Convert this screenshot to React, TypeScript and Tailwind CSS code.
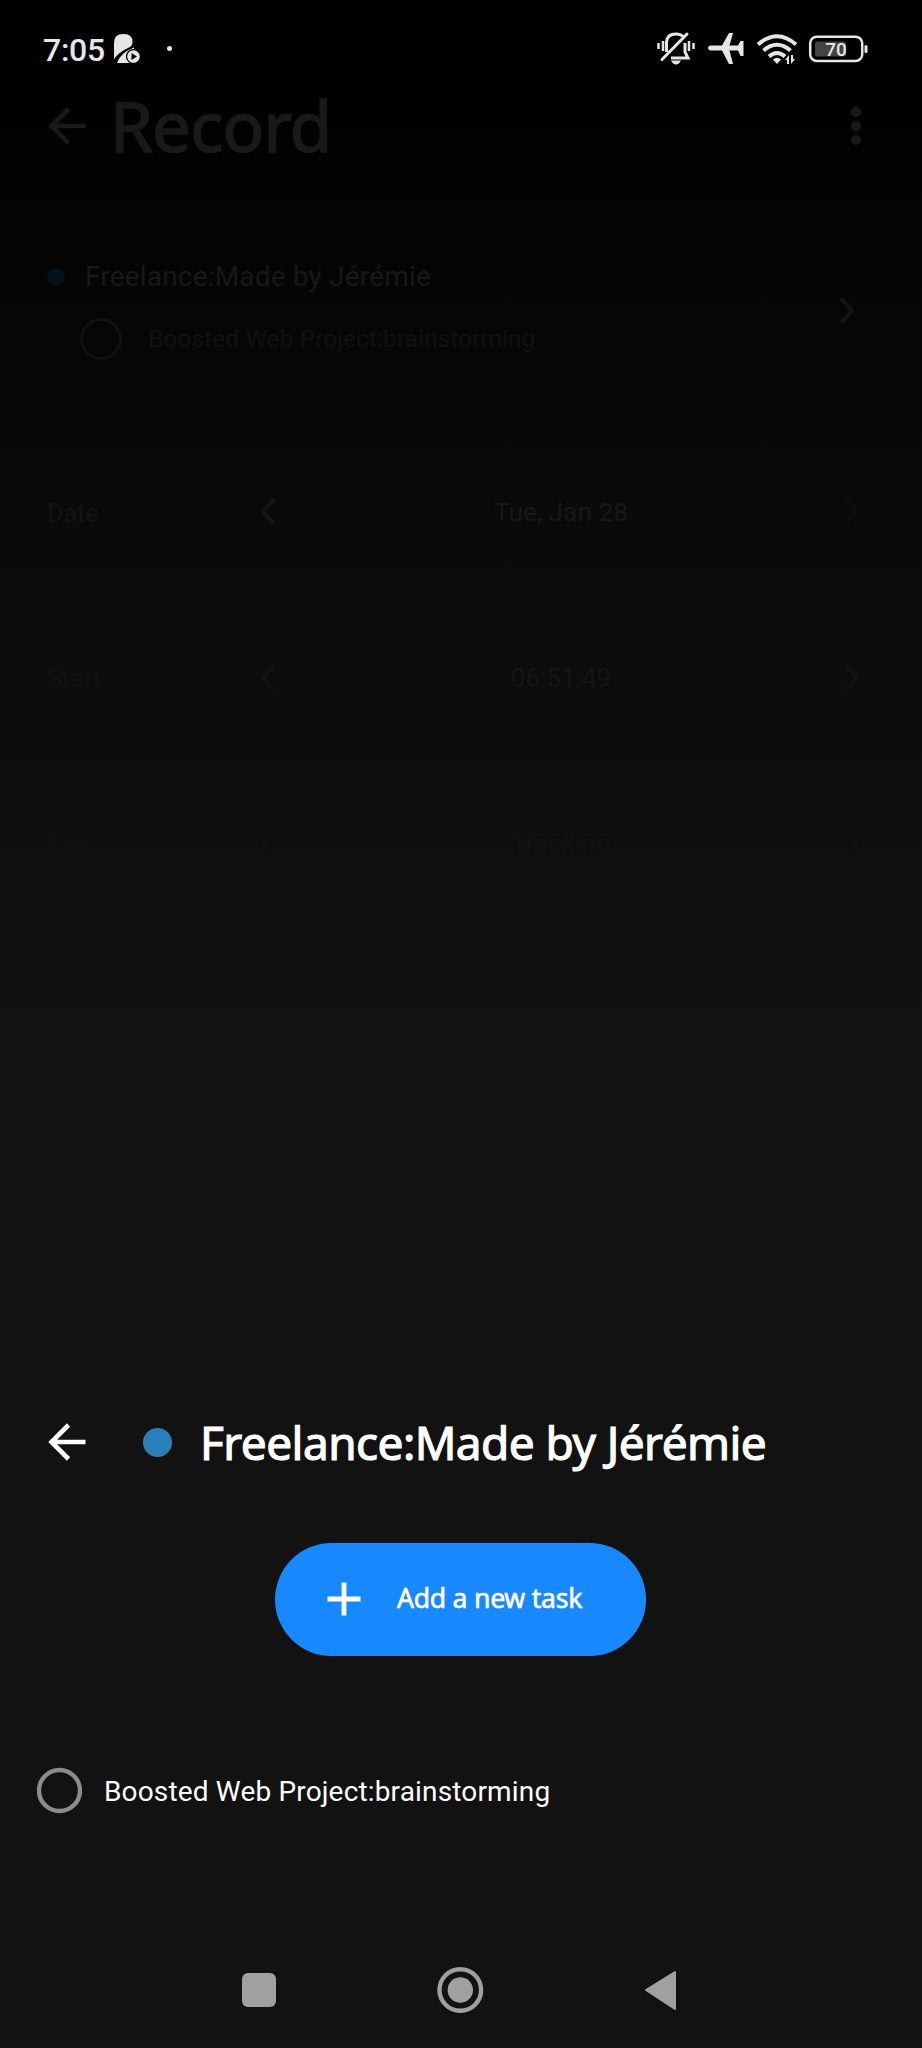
import React from "react";

const Chevron = ({ dir, className }: { dir: "left" | "right"; className: string }) => (
  <svg viewBox="0 0 16 27" className={`h-[27px] w-4 shrink-0 ${className}`} fill="none" stroke="currentColor" strokeWidth="4" strokeLinejoin="miter">
    <path d={dir === "left" ? "M14 1.5 3 13.5 14 25.5" : "M2 1.5 13 13.5 2 25.5"} />
  </svg>
);

const BackArrow = ({ className }: { className: string }) => (
  <svg viewBox="0 0 38 38" className={`h-[38px] w-[38px] shrink-0 ${className}`} fill="none" stroke="currentColor" strokeWidth="4.6">
    <path d="M37.5 19H4M20.5 2 3.5 19 20.5 36" />
  </svg>
);

const StatusBar = () => (
  <header className="flex h-24 shrink-0 items-center pl-[43px] text-[#e6e6e6]">
    <span className="mt-[4px] w-[68px] text-[32px] leading-none font-medium tracking-[-0.3px]">7:05</span>
    <svg viewBox="0 0 30 32" className="mt-[1px] ml-[2px] h-8 w-[30px]">
      <path fill="currentColor" d="M1 26V10Q1 1 10 1H11Q19.500 1 19.500 9Q19.500 12.500 16 14.500Q6 19 1 26Z" />
      <path fill="currentColor" d="M4 30Q7 20 21 14.500V20L17 30Z" />
      <circle cx="20.500" cy="23.500" r="7.600" fill="#000" />
      <circle cx="20.500" cy="23.500" r="6.300" fill="currentColor" />
      <path fill="#000" d="M18.500 20v7l5.500-3.500Z" />
    </svg>
    <span className="mt-[1px] ml-[24px] h-[5px] w-[5px] rounded-full bg-[#e6e6e6]" />
    <svg viewBox="0 0 220 40" className="mt-[4px] ml-[484px] h-10 w-[220px]" fill="none" stroke="currentColor">
      <path strokeWidth="2.500" d="M2.500 13v6M7 11v10M37.500 13v6M33 11v10" />
      <path strokeWidth="3" d="M10.500 22V12Q11 4 20 4Q25 4 27.500 7M29 13V22L32 28H15" />
      <path strokeWidth="3" strokeLinecap="round" d="M31 4 6 29.500" />
      <path fill="currentColor" stroke="none" d="M15 30.500h10q-2 4-5 4t-5-4Z" />
      <path fill="currentColor" stroke="none" d="M54 15.500H66L73 3H77L73.500 15.500H82L84.500 11H87.500V26H84.500L82 20.500H73.500L77 34H73L66 20.500H54Q50 18 54 15.500Z" />
      <path strokeWidth="4" d="M102 14.500Q121 -2 140 14.500M107.500 20.500Q121 9 134.500 20.500M113 26.500Q121 19.500 129 26.500" />
      <path fill="currentColor" stroke="none" d="M117 29.500Q121 26 125 29.500L121 34Z" />
      <path fill="currentColor" stroke="none" d="M129 30l4-5v9h-2v-4ZM139 29l-4 5v-9h2v4Z" />
      <g transform="translate(1 .5)">
        <rect x="153.200" y="6.200" width="52" height="24.200" rx="6.500" strokeWidth="2.500" />
        <rect x="158" y="11" width="31" height="15" rx="2" fill="#444" stroke="none" />
        <path strokeWidth="3" strokeLinecap="round" d="M209 16v5" />
        <text x="179" y="25" textAnchor="middle" fontSize="19" fontWeight="500" fill="currentColor" stroke="none">70</text>
      </g>
    </svg>
  </header>
);

const rows = [
  { label: "Date", value: "Tue, Jan 28", text: "text-[#181818]", labelColor: "text-[#131313]", left: "text-[#161616]", right: "text-[#0e0e0e]", size: "text-[26.3px]" },
  { label: "Start", value: "06:51:49", text: "text-[#151515]", labelColor: "text-[#121212]", left: "text-[#131313]", right: "text-[#131313]", size: "text-[26px]" },
  { label: "End", value: "Tracking", text: "text-[#121212]", labelColor: "text-[#101010]", left: "text-[#111111]", right: "text-[#111111]", size: "text-[26px]" },
];

export default function App() {
  return (
    <div className="flex h-[2048px] w-[922px] flex-col overflow-hidden bg-[#121212] bg-[linear-gradient(to_bottom,#000_0px,#010101_100px,#050505_280px,#0a0a0a_520px,#0d0d0d_720px,#101010_900px,#121212_1050px,#121212_2048px)] font-[Roboto,sans-serif]">
      <StatusBar />

      <div className="flex h-[66px] shrink-0 items-center pr-[59px] pl-[48px] text-[#191919]">
        <BackArrow className="mt-[-6px]" />
        <h1 className="mt-[-8px] ml-[24px] flex-1 font-['Noto_Sans',sans-serif] text-[69px] leading-[66px] font-normal tracking-[-0.8px] [-webkit-text-stroke:1.6px_currentColor]">Record</h1>
        <div className="mt-[-6px] flex flex-col gap-1 pr-[2px]">
          <i className="h-[10px] w-[10px] rounded-full bg-current" />
          <i className="h-[10px] w-[10px] rounded-full bg-current" />
          <i className="h-[10px] w-[10px] rounded-full bg-current" />
        </div>
      </div>

      <section className="mt-[82px] flex h-[132px] shrink-0 items-center pr-[67px] pl-[47px]">
        <div className="flex-1 pb-[7px]">
          <div className="flex h-16 items-center">
            <i className="h-[18px] w-[18px] rounded-full bg-[#04101a]" />
            <span className="ml-[20px] text-[28px] leading-none tracking-[0.180px] text-[#181818]">Freelance:Made by Jérémie</span>
          </div>
          <div className="flex h-[60px] items-center pl-[33px]">
            <i className="h-[42px] w-[42px] rounded-full border-[3px] border-[#111]" />
            <span className="mt-[2px] ml-[26px] text-[24.600px] leading-none text-[#111]">Boosted Web Project:brainstorming</span>
          </div>
        </div>
        <Chevron dir="right" className="text-[#151515]" />
      </section>

      <section className="mt-[53px] shrink-0">
        {rows.map((r) => (
          <div key={r.label} className="flex h-[165.5px] items-center pr-[62px] pl-[47px]">
            <span className={`mt-[3px] w-[213px] text-[25px] leading-none ${r.labelColor}`}>{r.label}</span>
            <Chevron dir="left" className={r.left} />
            <span className={`mt-px flex-1 pl-[2px] text-center leading-none ${r.size} ${r.text}`}>{r.value}</span>
            <Chevron dir="right" className={r.right} />
          </div>
        ))}
      </section>

      <div className="mt-auto flex h-[100px] shrink-0 items-center pl-[48px] text-white">
        <BackArrow className="" />
        <i className="ml-[57px] h-[29px] w-[29px] rounded-full bg-[#2980b9]" />
        <h2 className="ml-[28px] font-['Noto_Sans',sans-serif] text-[46px] leading-none font-normal tracking-[-0.560px] whitespace-nowrap [-webkit-text-stroke:1.1px_currentColor]">Freelance:Made by Jérémie</h2>
      </div>

      <button className="mt-[51px] ml-[275px] flex h-[113px] w-[371px] shrink-0 items-center rounded-full bg-[#1888ff] pl-[52px] text-white">
        <svg viewBox="0 0 34 34" className="mt-[-1px] h-[34px] w-[34px]" stroke="currentColor" strokeWidth="4.800">
          <path d="M17 .5v33M.5 17h33" />
        </svg>
        <span className="mt-[-2px] ml-[36px] font-['Noto_Sans',sans-serif] text-[26.600px] leading-none font-normal tracking-[-0.250px] whitespace-nowrap [-webkit-text-stroke:0.6px_currentColor]">Add a new task</span>
      </button>

      <div className="mt-[84px] flex h-[102px] shrink-0 items-center pl-[37px]">
        <svg viewBox="0 0 45 47" className="mt-[-1px] h-[47px] w-[45px]" fill="none" stroke="#8c8c8c" strokeWidth="4.4">
          <circle cx="22.500" cy="23.500" r="20.500" />
        </svg>
        <span className="mt-[2px] ml-[22px] text-[28px] leading-none tracking-[0.160px] text-white">Boosted Web Project:brainstorming</span>
      </div>

      <nav className="mt-[90px] h-[116px] shrink-0">
        <svg viewBox="0 0 922 116" className="h-[116px] w-[922px]" fill="#a0a0a0">
          <rect x="242" y="41" width="34" height="34" rx="6" />
          <circle cx="460.300" cy="58" r="20.800" fill="none" stroke="#a0a0a0" strokeWidth="4.400" />
          <circle cx="460.300" cy="58" r="12.700" />
          <path d="M646 58 675 40v37Z" stroke="#a0a0a0" strokeWidth="2" strokeLinejoin="round" />
        </svg>
      </nav>
    </div>
  );
}
